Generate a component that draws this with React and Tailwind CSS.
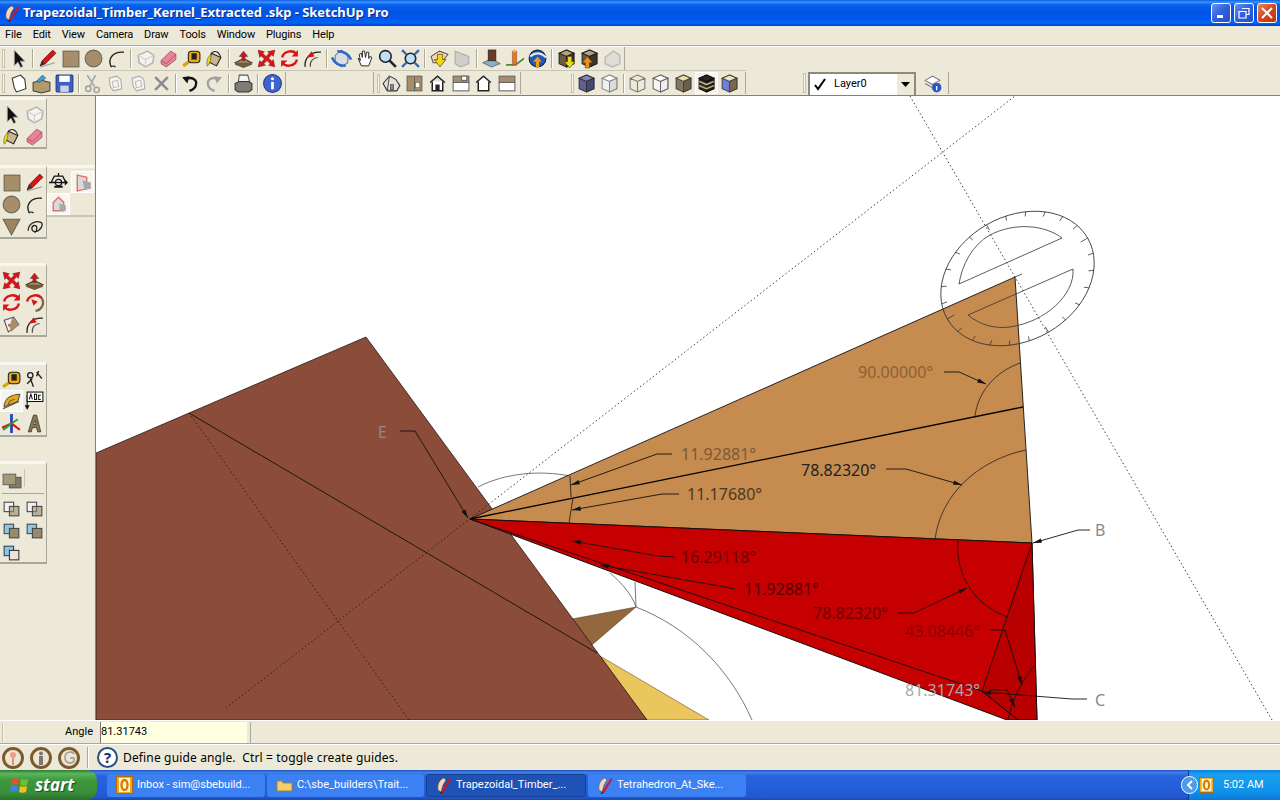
import React from 'react'

const FONT = "font-['Noto_Sans',sans-serif]"
const UI = "font-['Roboto',sans-serif]"

const cube = (top, left, right, stroke = '#555') => (
  <>
    <path d="M10 2l7 3v10l-7 3-7-3V5z" fill={left} stroke={stroke} />
    <path d="M10 2l7 3-7 3-7-3z" fill={top} stroke={stroke} />
    <path d="M10 8l7-3v10l-7 3z" fill={right} stroke={stroke} />
  </>
)
const house = (body, roof) => (
  <>
    <path d="M3 9l7-6 7 6" fill={roof} stroke="#222" strokeWidth="1.400" />
    <path d="M5 8v9h10V8" fill={body} stroke="#222" strokeWidth="1.400" />
  </>
)
const pane = (top, bottom) => (
  <>
    <rect x="3" y="3" width="15" height="6" fill={top} stroke="#666" />
    <rect x="3" y="9" width="15" height="8" fill={bottom} stroke="#666" />
  </>
)
const arrowUp = (c) => <path d="M10 3l4 5h-2.500v4h-3V8H6z" fill={c} stroke="#333" strokeWidth=".5" />
const pages = (
  <>
    <path d="M4 5l7-2 4 3 1 9-8 2-3-4z" fill="#f4f4f0" stroke="#aaa" />
    <path d="M7 8l5-1 1 6-5 1z" fill="none" stroke="#bbb" />
  </>
)

// every toolbar glyph, drawn on a 20x20 grid
const ICONS = {
  select: <path d="M6 2v15l3.500-3.500 2.500 5 2.200-1-2.500-5H16z" fill="#111" stroke="#aaa" strokeWidth=".8" />,
  pencil: (
    <>
      <path d="M3 18l14-4" stroke="#999" />
      <path d="M3 17l2-5L15 2l3 3L8 15z" fill="#d8141a" stroke="#611" strokeWidth=".7" />
      <path d="M3 17l2-5 3 3z" fill="#333" />
    </>
  ),
  rect: <rect x="3" y="3" width="15" height="15" fill="#a78d6a" stroke="#665" />,
  circle: <circle cx="10" cy="10" r="8" fill="#a78d6a" stroke="#665" />,
  arc: (
    <path d="M5 18C1 10 7 3 17 4M5 18c1-1 3-1 4 0" fill="none" stroke="#222" strokeWidth="1.300" />
  ),
  ghost: (
    <>
      <path d="M3 7l9-4 6 4-1 7-7 4-6-4z" fill="#f4f3ee" stroke="#b5b5b5" strokeWidth="1.500" />
      <path d="M3 7l7 4 8-4M10 11v7" fill="none" stroke="#cfcfcf" />
    </>
  ),
  eraser: (
    <>
      <path d="M3 12l9-9 5 3v5l-9 7-5-3z" fill="#e8839c" stroke="#844" strokeWidth=".7" />
      <path d="M3 12l5 3 9-9" fill="none" stroke="#a44" strokeWidth=".7" />
    </>
  ),
  tape: (
    <>
      <path d="M2 17l7-5" stroke="#d8a514" strokeWidth="3" />
      <rect x="7" y="3" width="11" height="11" rx="3" fill="#e8a914" stroke="#222" />
      <rect x="10" y="5" width="5" height="6" fill="#222" />
    </>
  ),
  paint: (
    <>
      <path d="M7 5l9 4-4 8-8-4z" fill="#c9b58f" stroke="#222" />
      <path d="M7 5c3-3 7-2 9 4" fill="none" stroke="#222" />
      <path d="M7 6c-3 2-5 6-4 11 1 1 2-3 3-5z" fill="#f3e30c" stroke="#332" strokeWidth=".5" />
    </>
  ),
  push: (
    <>
      <path d="M2 14l8-4 8 4-8 4z" fill="#a88a5e" stroke="#432" />
      <path d="M2 14v2l8 3 8-3v-2" fill="#6f5a3c" />
      {arrowUp('#d8141a')}
    </>
  ),
  move: (
    <path
      d="M2 2l6 1.500-1.500 1.500 3 3 3-3L11 3.500 18 2l-1.500 6-1.500-1.500-3 3 3 3 1.500-1.500L18 18l-6-1.500 1.500-1.500-3-3-3 3L9 16.500 2 18l1.500-6L5 13.500l3-3-3-3L3.500 9z"
      fill="#d8141a"
      stroke="#611"
      strokeWidth=".4"
    />
  ),
  rotate: (
    <>
      <path d="M3 9c1-6 10-8 14-3" fill="none" stroke="#d8141a" strokeWidth="2.200" />
      <path d="M17 11c-1 6-10 8-14 3" fill="none" stroke="#d8141a" strokeWidth="2.200" />
      <path d="M18 2v6h-6zM2 18v-6h6z" fill="#d8141a" />
    </>
  ),
  offset: (
    <>
      <path d="M3 18C2 10 8 3 18 4" fill="none" stroke="#222" strokeWidth="1.200" />
      <path d="M8 18C7 13 11 9 15 9" fill="none" stroke="#555" />
      <path d="M5 9l7-1-3-5z" fill="#d8141a" />
    </>
  ),
  orbit: (
    <>
      <path d="M4 7l6-5 6 5v7l-6 4-6-4z" fill="#d8dde8" stroke="#778" />
      <path d="M1 9c2 5 6 8 13 8M19 11C17 6 13 3 6 3" fill="none" stroke="#2b66c8" strokeWidth="2.400" />
    </>
  ),
  pan: <path d="M4 10l3 7h7l3-8-2-1-1 2 0-6-2 0-1 5-1-6-2 0 0 6-1-4-2 1 1 6-1-2z" fill="#fff" stroke="#222" strokeWidth=".9" />,
  zoom: (
    <>
      <circle cx="8" cy="8" r="5.500" fill="#bfe0f5" stroke="#223" strokeWidth="1.500" />
      <path d="M12 12l6 6" stroke="#223" strokeWidth="2.500" />
    </>
  ),
  extents: (
    <>
      <circle cx="10" cy="10" r="5" fill="#bfe0f5" stroke="#223" strokeWidth="1.500" />
      <path d="M2 2l4 4M18 2l-4 4M2 18l4-4M18 18l-4-4" stroke="#2b66c8" strokeWidth="2.200" />
    </>
  ),
  sectionIn: (
    <>
      <path d="M2 8l8-5 8 3-6 8H4z" fill="#f4ddb0" stroke="#654" />
      <path d="M8 6h5v5h3l-5.500 7L5 11h3z" fill="#f2d90f" stroke="#443" strokeWidth=".7" />
    </>
  ),
  sectionOut: <path d="M3 3l13 5v7l-8 3-5-3z" fill="#cfcfc9" stroke="#aaa" />,
  city: (
    <>
      <path d="M2 14l8-4 8 5-8 3z" fill="#7fb3d0" stroke="#777" />
      <rect x="7" y="2" width="7" height="10" fill="#6c3a28" stroke="#432" />
    </>
  ),
  location: (
    <>
      <path d="M2 16h9l8-6" fill="none" stroke="#4a8a34" strokeWidth="1.600" />
      <path d="M8 3h4v13H8z" fill="#e27a1c" stroke="#844" strokeWidth=".5" />
      <path d="M10 1l2 3H8z" fill="#e9c018" />
    </>
  ),
  earth: (
    <>
      <circle cx="10" cy="10" r="8" fill="#2158b8" stroke="#123" />
      <path d="M3 8c5-4 10-4 15 1" fill="none" stroke="#dfe7f2" strokeWidth="2" />
      <path d="M10 8l4 5h-2.500v5h-3v-5H6z" fill="#f09a1a" />
    </>
  ),
  getModel: (
    <>
      {cube('#b5a27d', '#6a5a42', '#3e3428', '#222')}
      <path d="M11 8h4v5h3l-5 6-5-6h3z" fill="#f2d90f" stroke="#443" strokeWidth=".6" />
    </>
  ),
  shareModel: (
    <>
      {cube('#b5a27d', '#6a5a42', '#3e3428', '#222')}
      <path d="M8 8l5 6h-3v5H6v-5H3z" fill="#f0901a" stroke="#443" strokeWidth=".6" />
    </>
  ),
  shareOff: <path d="M3 9l8-6 6 4v8l-7 3-7-3z" fill="#dedcd5" stroke="#bbb" strokeWidth="1.400" />,
  newFile: <path d="M4 5l8-3 4 4 1 9-9 3-2-4z" fill="#fff" stroke="#333" />,
  open: (
    <>
      <path d="M2 9l8-2 8 2v8l-8 2-8-2z" fill="#b39a6e" stroke="#443" />
      <path d="M5 8l6-6 3 3-6 4z" fill="#36a2d8" stroke="#134" strokeWidth=".5" />
    </>
  ),
  save: (
    <>
      <rect x="2" y="2" width="16" height="16" rx="1" fill="#3f5fc8" stroke="#223a80" />
      <rect x="5" y="2.500" width="10" height="6" fill="#fff" />
      <rect x="6" y="12" width="8" height="6" fill="#cfd4e4" />
    </>
  ),
  cut: (
    <g fill="none" stroke="#a3a3a3" strokeWidth="1.500">
      <path d="M5 2l7 11M13 2L9 9" />
      <circle cx="14" cy="16" r="2.500" />
      <circle cx="6" cy="15" r="2.500" />
      <path d="M7 13l2-3" />
    </g>
  ),
  copy: pages,
  paste: pages,
  cross: <path d="M4 4l12 12M16 4L4 16" stroke="#8c8c8c" strokeWidth="2.400" />,
  undo: (
    <>
      <path d="M5 6c6-3 12 0 10 6-1 3-3 4-6 5" fill="none" stroke="#111" strokeWidth="2.200" />
      <path d="M2 4l7-1-2 7z" fill="#111" />
    </>
  ),
  redo: (
    <>
      <path d="M15 6C9 3 3 6 5 12c1 3 3 4 6 5" fill="none" stroke="#a0a0a0" strokeWidth="2.200" />
      <path d="M18 4l-7-1 2 7z" fill="#a0a0a0" />
    </>
  ),
  print: (
    <>
      <path d="M6 2h8l2 7H5z" fill="#f4f4f4" stroke="#555" />
      <path d="M2 10l4-2h9l3 2v6l-3 2H5l-3-2z" fill="#7c7c74" stroke="#333" />
    </>
  ),
  info: (
    <>
      <circle cx="10" cy="10" r="8.500" fill="#3f64d0" stroke="#1e3a8a" />
      <circle cx="10" cy="5.500" r="1.500" fill="#fff" />
      <path d="M10 8.500v7" stroke="#fff" strokeWidth="2.600" />
    </>
  ),
  isoHouse: (
    <>
      <path d="M2 10l6-7 6 3 4 6-3 5H6z" fill="#e4e2da" stroke="#333" />
      <path d="M8 3l-2 14" stroke="#555" />
      <rect x="9" y="11" width="3" height="5" fill="#888" stroke="#333" strokeWidth=".5" />
    </>
  ),
  boxSide: (
    <>
      <rect x="3" y="3" width="14" height="14" fill="#a78d6a" stroke="#665" />
      <path d="M10 3v14" stroke="#665" />
      <rect x="11" y="9" width="4" height="5" fill="#fff" stroke="#665" strokeWidth=".6" />
    </>
  ),
  iso: (
    <>
      {house('#fff', '#ddd')}
      <rect x="8" y="11" width="4" height="6" fill="#222" />
    </>
  ),
  viewTop: (
    <>
      {pane('#a78d6a', '#fff')}
      <rect x="11" y="3" width="5" height="4" fill="#fff" stroke="#666" />
    </>
  ),
  viewFront: house('#fff', '#fff'),
  viewBack: pane('#a78d6a', '#fff'),
  xray: cube('#8187b6', '#5d6190', '#474a70', '#333'),
  edges: cube('#fff', '#f0f0f0', '#dcdcdc', '#888'),
  wire: <path d="M10 2l7 3v10l-7 3-7-3V5zM3 5l7 3 7-3M10 8v10" fill="none" stroke="#777" />,
  hidden: cube('#fff', '#f5f5f5', '#ededed', '#666'),
  shaded: cube('#ecdca6', '#83785c', '#6a6049', '#444'),
  textured: (
    <>
      {cube('#2a2a22', '#2a2a22', '#1d1d18', '#111')}
      <path d="M3 8l7 3 7-3M3 12l7 3 7-3" fill="none" stroke="#c8b27c" strokeWidth="1.500" />
    </>
  ),
  mono: cube('#efe6bd', '#6d7fe0', '#7a6648', '#444'),
  layerMgr: (
    <>
      <path d="M3 7l7-4 7 4-7 4z" fill="#fff" stroke="#778" />
      <path d="M3 10l7 4 7-4" fill="none" stroke="#778" />
      <circle cx="14" cy="14" r="4.500" fill="#2b58c0" />
      <rect x="13.400" y="12.500" width="1.200" height="4" fill="#fff" />
    </>
  ),
  poly: <path d="M2 3h16l-8 15z" fill="#a08460" stroke="#665" />,
  freehand: (
    <path d="M4 14c0-6 6-10 12-8 3 2 0 8-5 9-4 0-5-5-1-6 3 0 3 5 0 7" fill="none" stroke="#222" strokeWidth="1.200" />
  ),
  walk: (
    <>
      <circle cx="10" cy="10" r="3" fill="#fff" stroke="#111" strokeWidth="1.200" />
      <path d="M1 10h17M10 1v3M3 10l3-6h8l3 6" fill="none" stroke="#111" strokeWidth="1.200" />
      <path d="M16 7l3 3-3 3zM6 13h8v2H6z" fill="#111" />
    </>
  ),
  secRed: (
    <>
      <path d="M5 3l9 2v11l-9 2z" fill="#d9d9d9" stroke="#e56b6b" strokeWidth="1.300" />
      <path d="M10 8l8 2v6l-6 1z" fill="#a8a8a8" />
    </>
  ),
  secHouse: (
    <>
      <path d="M5 8l5-5 5 5v8H5z" fill="#d9d9d9" stroke="#e56b6b" strokeWidth="1.300" />
      <path d="M11 9l6 2v5h-6z" fill="#a8a8a8" />
    </>
  ),
  spin: (
    <>
      <path d="M3 9c1-6 10-8 14-3" fill="none" stroke="#d8141a" strokeWidth="2.200" />
      <path d="M17 6a8 8 0 0 1-6 12" fill="none" stroke="#7a6648" strokeWidth="2.200" />
      <path d="M7 7l6 2-4 4z" fill="#d8141a" />
    </>
  ),
  scale: (
    <>
      <path d="M3 6l9-3 5 7-10 7z" fill="#f0f0f0" stroke="#555" />
      <path d="M11 3l6 7-7 7-2-5z" fill="#a78d6a" />
      <path d="M3 5l6 6-2 1 0-3z" fill="#d8141a" />
    </>
  ),
  guide: (
    <g fill="none" stroke="#222" strokeWidth="1.300">
      <circle cx="6" cy="6" r="2.500" />
      <path d="M3 14l5-5M6 9l3 8M12 3l5 6M14 2l-2 5" />
    </g>
  ),
  protractor: (
    <>
      <path d="M3 15C3 8 9 3 18 3L16 10z" fill="#e8a914" stroke="#554" />
      <path d="M7 13c0-3 3-5 6-5" fill="none" stroke="#554" />
      <path d="M2 17l15-7" stroke="#554" />
    </>
  ),
  label: (
    <>
      <path d="M3 4v13M3 17l-1.500-3h3z" fill="#111" stroke="#111" />
      <rect x="3" y="1" width="15" height="9" fill="#fff" stroke="#111" />
      <path d="M5 8l1.500-5L8 8M10 3v5h2v-5zM16 4h-2v4h2" fill="none" stroke="#111" />
    </>
  ),
  axes: (
    <>
      <path d="M10 1v18" stroke="#2040c0" strokeWidth="2.600" />
      <path d="M1 14l9-4 8 6" fill="none" stroke="#d8141a" strokeWidth="2" />
      <path d="M2 16l8-6" stroke="#2a9a30" strokeWidth="2" />
      <path d="M10 10l6-4" stroke="#2a9a30" strokeWidth="1.600" />
    </>
  ),
  threeD: (
    <path d="M4 18l5-16h3l4 16h-3l-1-4H8l-1 4zM9 11h2.500L10.500 7z" fill="#8c7550" stroke="#333" strokeWidth=".7" fillRule="evenodd" />
  ),
  solid: (
    <>
      <rect x="8" y="7" width="11" height="10" fill="#857a64" stroke="#555" />
      <rect x="2" y="4" width="12" height="10" fill="#a79877" stroke="#666" />
    </>
  ),
  outerA: (
    <>
      <rect x="3" y="4" width="9" height="9" fill="#f2f2f2" stroke="#444" />
      <rect x="8" y="8" width="9" height="9" fill="#9a8a6c" fillOpacity=".6" stroke="#444" />
    </>
  ),
  outerB: (
    <>
      <rect x="3" y="4" width="9" height="9" fill="#8ec6e8" stroke="#444" />
      <rect x="8" y="8" width="9" height="9" fill="#9a8a6c" stroke="#444" />
    </>
  ),
  outerC: (
    <>
      <rect x="3" y="4" width="9" height="9" fill="#8ec6e8" stroke="#245" />
      <rect x="8" y="8" width="9" height="9" fill="#e8e4d8" stroke="#333" />
    </>
  ),
}

const Tool = ({ name, active }) => (
  <div className={`w-[23px] h-[22px] flex items-center justify-center shrink-0 ${active ? 'bg-[#f6f5f0] border border-white' : ''}`}>
    <svg width="21" height="21" viewBox="0 0 20 20">{ICONS[name]}</svg>
  </div>
)

const Sep = ({ gap = 'mx-[2px]' }) => (
  <div className={`w-px h-[19px] bg-[#aca899] border-r border-white box-content shrink-0 ${gap}`} />
)

const Grip = () => <div className="w-[3px] h-[20px] shrink-0 bg-[#f7f6f0] border border-[#c4c0ae]" />

const Tools = ({ names }) => names.map((n) => <Tool key={n} name={n} />)

const SideBar = ({ rows, height, className = '' }) => (
  <div className={`w-[47px] ${height} border-t-[3px] border-t-[#f7f6f0] border-r border-r-[#aca899] border-b-2 border-b-[#aca899] pt-[3px] ${className}`}>
    <div className="grid grid-cols-2 w-[46px]">
      {rows.map((n, i) => (n === 'protractor' ? <Tool key={i} name={n} active /> : <Tool key={i} name={n} />))}
    </div>
  </div>
)

const Dim = ({ x, y, fill, children }) => (
  <text x={x} y={y} fill={fill} fontSize="16">{children}</text>
)

const Leader = ({ points }) => {
  const p = points[points.length - 1]
  const q = points[points.length - 2]
  const a = Math.atan2(p[1] - q[1], p[0] - q[0])
  const head = [
    [p[0] - 9 * Math.cos(a - 0.25), p[1] - 9 * Math.sin(a - 0.25)],
    [p[0] - 9 * Math.cos(a + 0.25), p[1] - 9 * Math.sin(a + 0.25)],
  ]
  return (
    <>
      <polyline points={points.join(' ')} fill="none" stroke="#111" strokeWidth=".9" />
      <polygon points={`${p} ${head[0]} ${head[1]}`} fill="#111" />
    </>
  )
}

// tick marks round the protractor rim, worked out from its ellipse
const ticks = Array.from({ length: 24 }, (_, i) => {
  const t = (i * Math.PI) / 12
  const r = (-30 * Math.PI) / 180
  const pt = (k) => {
    const ex = 81 * k * Math.cos(t)
    const ey = 62 * k * Math.sin(t)
    return [1017.5 + ex * Math.cos(r) - ey * Math.sin(r), 278.5 + ex * Math.sin(r) + ey * Math.cos(r)]
  }
  return [pt(1), pt(i % 6 === 0 ? 0.9 : 0.93)]
})

const Canvas = () => (
  <svg viewBox="96 96 1184 624" className={`w-full h-full block ${FONT}`}>
    <rect x="96" y="96" width="1184" height="624" fill="#fff" />

    <path d="M478 487C505 473 540 470 570 476" fill="none" stroke="#555" strokeWidth=".8" />
    <path d="M610 573C622 583 632 595 636 607L635 582" fill="none" stroke="#555" strokeWidth=".8" />
    <path d="M636 607C690 628 730 670 752 720" fill="none" stroke="#555" strokeWidth=".8" />

    <polygon points="572,619 636,607 592,645" fill="#93683f" stroke="#4a3520" strokeWidth=".5" />
    <polygon points="600,656 709,720 647,720" fill="#ebc65d" stroke="#4a3520" strokeWidth=".5" />
    <polygon points="96,453 366,337 647,720 96,720" fill="#8b4d3a" stroke="#2a1a14" strokeWidth=".8" />
    <polygon points="470,519 1015,277 1032,543" fill="#c68b4f" stroke="#111" strokeWidth=".9" />
    <polygon points="470,519 1032,543 1037,720 1007,720" fill="#c60000" stroke="#111" strokeWidth="1" />
    <polygon points="1032,543 982,691 1018,720 1037,720" fill="#b80000" stroke="#111" strokeWidth=".9" />

    <path d="M189 413L597 653" stroke="#111" strokeWidth=".9" />
    <path d="M189 413L409 720" stroke="#111" strokeWidth=".8" strokeDasharray="1.500 2.500" />
    <path d="M226 708L1015 96" stroke="#111" strokeWidth=".8" strokeDasharray="1.500 2.500" />
    <path d="M910 96L1272 720" stroke="#111" strokeWidth=".8" strokeDasharray="1.500 2.500" />

    <path d="M470 519L1023 407" stroke="#000" strokeWidth="1.300" />
    <path d="M470 519L982 691L1018 720" fill="none" stroke="#111" strokeWidth=".9" />
    <path d="M975 416C978 392 995 372 1020 363" fill="none" stroke="#222" strokeWidth=".8" />
    <path d="M935 540C940 495 978 460 1026 450" fill="none" stroke="#222" strokeWidth=".8" />
    <path d="M570 476L571 497M573 498L569 523" fill="none" stroke="#222" strokeWidth=".9" />
    <path d="M958 541C955 575 975 606 1008 617" fill="none" stroke="#111" strokeWidth=".8" />
    <path d="M1035 665C1022 680 1012 700 1008 720" fill="none" stroke="#111" strokeWidth=".8" />

    <ellipse cx="1017.500" cy="278.500" rx="81" ry="62" transform="rotate(-30 1017.500 278.500)" fill="none" stroke="#333" strokeWidth=".8" />
    <path d="M959 284L1062 238C1045 225 1015 222 990 235C972 245 962 265 959 284Z" fill="none" stroke="#333" strokeWidth=".8" />
    <path d="M968 315L1073 269C1075 295 1045 322 1010 327C995 329 980 325 968 315Z" fill="none" stroke="#333" strokeWidth=".8" />
    <path d="M1015 277L1022 274" stroke="#333" strokeWidth=".8" />
    {ticks.map(([a, b], i) => (
      <line key={i} x1={a[0]} y1={a[1]} x2={b[0]} y2={b[1]} stroke="#333" strokeWidth=".8" />
    ))}

    <Leader points={[[944, 372], [959, 372], [986, 384]]} />
    <Leader points={[[672, 454], [657, 454], [571, 485]]} />
    <Leader points={[[679, 494], [662, 494], [572, 510]]} />
    <Leader points={[[886, 469], [906, 469], [962, 485]]} />
    <Leader points={[[675, 557], [658, 556], [572, 541]]} />
    <Leader points={[[735, 589], [725, 587], [600, 565]]} />
    <Leader points={[[898, 613], [914, 613], [967, 588]]} />
    <Leader points={[[990, 630], [1005, 630], [1022, 685]]} />
    <Leader points={[[990, 690], [1007, 690], [1015, 707]]} />
    <Leader points={[[1087, 699], [1072, 699], [982, 692]]} />
    <Leader points={[[1090, 530], [1078, 530], [1033, 543]]} />
    <Leader points={[[400, 431], [415, 431], [468, 518]]} />

    <Dim x="858" y="378" fill="#8a6238">90.00000°</Dim>
    <Dim x="681" y="460" fill="#7a5a36">11.92881°</Dim>
    <Dim x="687" y="500" fill="#4a3a20">11.17680°</Dim>
    <Dim x="801" y="476" fill="#222222">78.82320°</Dim>
    <Dim x="681" y="563" fill="#6a0000">16.29118°</Dim>
    <Dim x="744" y="595" fill="#500000">11.92881°</Dim>
    <Dim x="813" y="619" fill="#700000">78.82320°</Dim>
    <Dim x="905" y="637" fill="#8b0000">43.08446°</Dim>
    <Dim x="905" y="696" fill="#a8a8a8">81.31743°</Dim>
    <Dim x="378" y="438" fill="#8a8a8a">E</Dim>
    <Dim x="1095" y="536" fill="#8a8a8a">B</Dim>
    <Dim x="1095" y="706" fill="#8a8a8a">C</Dim>
  </svg>
)

const SuIcon = () => (
  <svg width="16" height="20" viewBox="0 0 16 20">
    <path d="M2 15C1 9 4 4 8 3l2 2-3 5-2 7z" fill="#f0d8b8" stroke="#6a4a30" strokeWidth=".6" />
    <path d="M5 17L14 3l1.500 1L7 18z" fill="#d8141a" />
    <path d="M3 19l2-2 2 1z" fill="#222" />
  </svg>
)

const OutlookIcon = ({ size = 17 }) => (
  <svg width={size} height={size + 1} viewBox="0 0 17 18">
    <rect x=".5" y=".5" width="16" height="17" fill="#f0a818" stroke="#b06a08" />
    <rect x="3" y="2" width="11" height="14" fill="#fff3c8" />
    <ellipse cx="8.500" cy="9" rx="3" ry="5" fill="none" stroke="#d87c08" strokeWidth="2.400" />
  </svg>
)

const Flag = () => (
  <svg width="20" height="20" viewBox="0 0 20 20">
    <path d="M2 4c2-1 5-1 7 0l-1 6c-2-1-5-1-7 0z" fill="#e8502a" />
    <path d="M11 4c2 1 5 1 7 0l-1 6c-2 1-5 1-7 0z" fill="#6cc038" />
    <path d="M1 11c2-1 5-1 7 0l-1 6c-2-1-5-1-7 0z" fill="#3a84e8" />
    <path d="M10 11c2 1 5 1 7 0l-1 6c-2 1-5 1-7 0z" fill="#f4c020" />
  </svg>
)

const TaskButton = ({ width, active, icon, children }) => (
  <div
    className={`h-[23px] ${width} rounded-[3px] flex items-center pl-[9px] gap-[4px] shrink-0 text-white text-[11px] whitespace-nowrap ${UI} ${
      active ? 'bg-[#1e52b7] border border-[#17408f]' : 'bg-[#3c81f3]'
    }`}
  >
    {icon}
    <span>{children}</span>
  </div>
)

const RingButton = ({ children }) => (
  <div className="w-[22px] h-[22px] rounded-full border-[3px] border-[#7a5a30] bg-[#efe6cf] flex items-center justify-center shrink-0">
    {children}
  </div>
)

const WinButton = ({ red, children }) => (
  <div
    className={`w-[20px] h-[20px] rounded-[3px] border border-white flex items-center justify-center ${
      red ? 'bg-[linear-gradient(135deg,#e8875f,#d8461c_50%,#b83410)]' : 'bg-[linear-gradient(135deg,#6a93ef,#2f5fdc_50%,#2450c8)]'
    }`}
  >
    <svg width="14" height="14" viewBox="0 0 14 14">{children}</svg>
  </div>
)

export default function App() {
  return (
    <div className={`w-[1280px] h-[800px] flex flex-col overflow-hidden bg-[#ece9d8] text-black ${FONT}`}>
      <div className="h-[26px] flex items-center pl-[4px] pr-[3px] shrink-0 bg-[linear-gradient(180deg,#0a5fe8_0%,#3e94f6_8%,#0a62ee_18%,#0054e3_45%,#0058ee_70%,#0064f5_88%,#0040cc_100%)]">
        <SuIcon />
        <span className="ml-[3px] text-white font-bold text-[13px] tracking-[-0.05px] whitespace-pre [text-shadow:1px_1px_0_#0a2a90]">
          Trapezoidal_Timber_Kernel_Extracted .skp - SketchUp Pro
        </span>
        <div className="ml-auto flex gap-[3px]">
          <WinButton>
            <rect x="3" y="9" width="6" height="3" fill="#fff" />
          </WinButton>
          <WinButton>
            <path d="M5 2.500h7v6H9.500M2 5.500h7v6.500H2z" fill="none" stroke="#fff" strokeWidth="1.200" />
          </WinButton>
          <WinButton red>
            <path d="M2 2l10 10M12 2L2 12" stroke="#fff" strokeWidth="2" />
          </WinButton>
        </div>
      </div>

      <div className={`h-[20px] flex items-center gap-[11px] pl-[5px] text-[11px] tracking-[-0.15px] shrink-0 border-b border-[#aca899] ${UI}`}>
        {['File', 'Edit', 'View', 'Camera', 'Draw', 'Tools', 'Window', 'Plugins', 'Help'].map((m) => (
          <span key={m}>{m}</span>
        ))}
      </div>

      <div className="h-[25px] shrink-0 border-t border-white">
        <div className="w-[746px] h-full flex items-center pl-[2px] border-b border-[#c8c5b5]">
          <div className="w-[623px] h-full flex items-center border-r border-[#aca899]">
            <div className="w-[3px] h-[19px] mr-[2px] bg-[#f7f6f0] border border-[#c4c0ae] shrink-0" />
            <Tool name="select" />
            <Sep />
            <Tools names={['pencil', 'rect', 'circle', 'arc']} />
            <Sep />
            <Tools names={['ghost', 'eraser', 'tape', 'paint']} />
            <Sep />
            <Tools names={['push', 'move', 'rotate', 'offset']} />
            <Sep />
            <Tools names={['orbit', 'pan', 'zoom', 'extents']} />
            <Sep />
            <Tools names={['sectionIn', 'sectionOut']} />
            <Sep />
            <Tools names={['city', 'location', 'earth']} />
            <Sep />
            <Tools names={['getModel', 'shareModel', 'shareOff']} />
          </div>
        </div>
      </div>

      <div className="h-[25px] shrink-0 flex items-center pl-[2px] border-b border-b-[#808080]">
        <div className="w-[3px] h-[19px] mr-[2px] bg-[#f7f6f0] border border-[#c4c0ae] shrink-0" />
        <Tools names={['newFile', 'open', 'save']} />
        <Sep gap="mx-[1.5px]" />
        <Tools names={['cut', 'copy', 'paste', 'cross']} />
        <Sep />
        <Tools names={['undo', 'redo']} />
        <Sep gap="mx-[2.5px]" />
        <Tool name="print" />
        <Sep />
        <Tool name="info" />
        <div className="w-px h-[22px] bg-[#aca899] ml-px" />
        <div className="w-px h-[22px] bg-[#aca899] ml-[87px]" />
        <div className="ml-[3px] w-[3px] h-[19px] bg-[#f7f6f0] border border-[#c4c0ae]" />
        <Tools names={['isoHouse', 'boxSide', 'iso', 'viewTop', 'viewFront', 'viewBack']} />
        <div className="w-px h-[22px] bg-[#aca899] ml-[2px]" />
        <div className="ml-[50px] w-[3px] h-[19px] bg-[#f7f6f0] border border-[#c4c0ae]" />
        <div className="w-[1px]" />
        <Tools names={['xray', 'edges']} />
        <Sep gap="mx-[1.5px]" />
        <Tools names={['wire', 'hidden', 'shaded']} />
        <Tool name="textured" active />
        <Tool name="mono" />
        <div className="w-px h-[22px] bg-[#aca899] ml-[4px]" />
        <div className="ml-[57px]">
          <Grip />
        </div>
        <div className={`ml-[2px] w-[108px] h-[23px] bg-white border-2 border-[#8e8b7c] border-b-0 flex items-center pl-[3px] text-[11px] ${UI}`}>
          <svg width="14" height="14" viewBox="0 0 14 14">
            <path d="M2 8l3 4 7-10" fill="none" stroke="#000" strokeWidth="2" />
          </svg>
          <span className="ml-[7px]">Layer0</span>
          <div className="ml-auto h-full w-[17px] bg-[#ece9d8] flex items-center justify-center">
            <svg width="9" height="5" viewBox="0 0 9 5">
              <path d="M0 0h9L4.500 5z" fill="#000" />
            </svg>
          </div>
        </div>
        <div className="ml-[5px]">
          <Tool name="layerMgr" />
        </div>
        <div className="w-px h-[22px] bg-[#aca899] ml-[4px]" />
      </div>

      <div className="h-[624px] shrink-0 flex">
        <div className="w-[95px] shrink-0 border-r border-[#808080] box-content flex flex-col">
          <SideBar rows={['select', 'ghost', 'paint', 'eraser']} height="h-[52px]" className="mt-px" />
          <div className="flex mt-[16px]">
            <SideBar rows={['rect', 'pencil', 'circle', 'arc', 'poly', 'freehand']} height="h-[74px]" />
            <div className="w-[48px] h-[52px] border-t-[3px] border-t-[#f7f6f0] border-b-2 border-b-[#c8c5b5] pt-[3px]">
              <div className="grid grid-cols-2">
                <Tool name="walk" />
                <Tool name="secRed" active />
                <Tool name="secHouse" active />
              </div>
            </div>
          </div>
          <SideBar rows={['move', 'push', 'rotate', 'spin', 'scale', 'offset']} height="h-[74px]" className="mt-[24px]" />
          <SideBar rows={['tape', 'guide', 'protractor', 'label', 'axes', 'threeD']} height="h-[75px]" className="mt-[25px]" />
          <div className="w-[47px] h-[103px] mt-[24px] border-t-[3px] border-t-[#f7f6f0] border-r border-r-[#aca899] border-b-2 border-b-[#aca899] pt-[5px]">
            <div className="flex">
              <Tool name="solid" />
              <div className="w-px h-[18px] bg-[#c8c5b5] ml-px" />
            </div>
            <div className="h-px bg-[#aca899] mx-[2px] mt-[2px] mb-[3px]" />
            <div className="grid grid-cols-2 w-[46px]">
              <Tool name="outerA" />
              <Tool name="outerA" />
              <Tool name="outerB" />
              <Tool name="outerB" />
              <Tool name="outerC" />
            </div>
          </div>
        </div>
        <div className="flex-1 min-w-0">
          <Canvas />
        </div>
      </div>

      <div className={`h-[24px] shrink-0 flex items-center border-t border-white border-b border-b-[#aca899] text-[11px] ${UI}`}>
        <div className="ml-[2px] w-[2px] h-[19px] bg-[#f7f6f0] border-l border-[#c4c0ae]" />
        <span className="w-[89px] text-right">Angle</span>
        <div className="ml-[7px] w-[147px] h-[21px] bg-[#ffffe1] flex items-center border-l border-[#777]">81.31743</div>
        <div className="ml-[3px] w-px h-[21px] bg-[#aca899]" />
      </div>

      <div className="h-[26px] shrink-0 flex items-center pl-[2px] border-t border-white">
        <RingButton>
          <svg width="12" height="14" viewBox="0 0 12 14">
            <circle cx="6" cy="4" r="3" fill="#f09a90" />
            <path d="M6 7v7" stroke="#c87870" strokeWidth="1.500" />
          </svg>
        </RingButton>
        <div className="ml-[6px]">
          <RingButton>
            <svg width="12" height="14" viewBox="0 0 12 14">
              <circle cx="6" cy="2.500" r="2" fill="#777" />
              <path d="M4 5h4v9H4z" fill="#777" />
            </svg>
          </RingButton>
        </div>
        <div className="ml-[6px]">
          <RingButton>
            <svg width="13" height="13" viewBox="0 0 13 13">
              <path d="M11 3C9 0 2 0 2 6.500S9 13 11 10V7H7" fill="none" stroke="#999" strokeWidth="1.500" />
            </svg>
          </RingButton>
        </div>
        <div className="ml-[7px] w-px h-[21px] bg-[#aca899] border-r border-white box-content" />
        <div className="ml-[8px] w-[21px] h-[21px] rounded-full border-2 border-[#29507f] bg-white flex items-center justify-center text-[15px] font-bold text-[#10306a] leading-none">
          ?
        </div>
        <span className="ml-[5px] text-[12px] tracking-[0.15px] whitespace-pre">Define guide angle.  Ctrl = toggle create guides.</span>
      </div>

      <div className="h-[30px] shrink-0 flex items-center bg-[linear-gradient(180deg,#1f50c0_0%,#3f7fe8_8%,#2a62dc_20%,#245edb_60%,#2258d0_90%,#1a48b4_100%)]">
        <div className="w-[97px] h-full rounded-r-[10px] flex items-center pl-[10px] gap-[5px] shrink-0 bg-[linear-gradient(180deg,#2e7a32_0%,#5cb55c_12%,#3c963c_35%,#3a8f3a_75%,#2a6f2e_100%)]">
          <Flag />
          <span className="text-white italic font-bold text-[17px] [text-shadow:1px_1px_1px_#1a4a1a]">start</span>
        </div>
        <div className="ml-[10px] flex gap-[2px]">
          <TaskButton width="w-[158px]" icon={<OutlookIcon />}>Inbox - sim@sbebuild...</TaskButton>
          <TaskButton
            width="w-[157px]"
            icon={
              <svg width="17" height="14" viewBox="0 0 17 14">
                <path d="M1 3h5l1 2h9v8H1z" fill="#f4cf6a" stroke="#a8802a" />
              </svg>
            }
          >
            C:\sbe_builders\Trait...
          </TaskButton>
          <TaskButton width="w-[160px]" active icon={<SuIcon />}>Trapezoidal_Timber_...</TaskButton>
          <TaskButton width="w-[158px]" icon={<SuIcon />}>Tetrahedron_At_Ske...</TaskButton>
        </div>
        <div className={`ml-auto w-[92px] h-full relative flex items-center pl-[10px] gap-[7px] text-white text-[11px] border-l border-[#0a3a8a] bg-[linear-gradient(180deg,#0c7fe0_0%,#1aa0f0_15%,#0f92ea_70%,#0c78d8_100%)] ${UI}`}>
          <div className="absolute left-[-8px] top-[6px] w-[17px] h-[18px] rounded-full bg-[#4f9ae8] border border-white flex items-center justify-center">
            <svg width="8" height="10" viewBox="0 0 8 10">
              <path d="M6 1L2 5l4 4" fill="none" stroke="#fff" strokeWidth="2" />
            </svg>
          </div>
          <OutlookIcon size={15} />
          <span className="ml-[2px]">5:02 AM</span>
        </div>
      </div>
    </div>
  )
}
